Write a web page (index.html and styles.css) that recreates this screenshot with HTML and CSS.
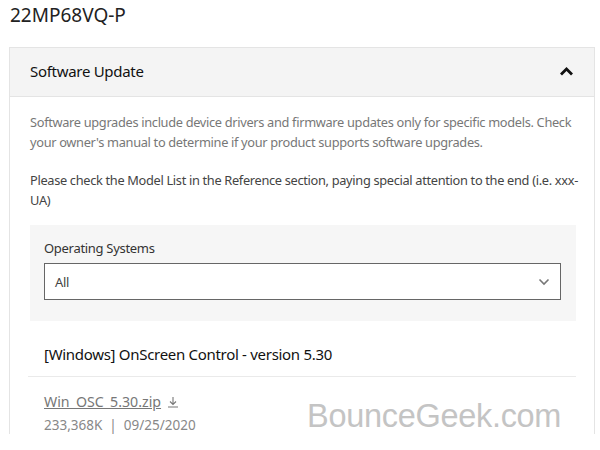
FILE: index.html
```html
<!DOCTYPE html>
<html lang="en">
<head>
    <meta charset="UTF-8">
    <meta name="viewport" content="width=device-width, initial-scale=1.0">
    <title>22MP68VQ-P Software Update</title>
    <link rel="stylesheet" href="styles.css">
</head>
<body>
    <h1 class="model">22MP68VQ-P</h1>
    <div class="card">
        <div class="card-head">
            <span>Software Update</span>
            <svg class="chev-up" width="15" height="10" viewBox="0 0 15 10">
                <path d="M2 8.5 L7.5 3 L13 8.5" fill="none" stroke="#111" stroke-width="2.8"/>
            </svg>
        </div>
        <div class="card-body">
            <p class="note">Software upgrades include device drivers and firmware updates only for specific models. Check your owner's manual to determine if your product supports software upgrades.</p>
            <p class="notice">Please check the Model List in the Reference section, paying special attention to the end (i.e. xxx-UA)</p>
            <div class="filter">
                <label>Operating Systems</label>
                <div class="select">
                    <span>All</span>
                    <svg width="12" height="8" viewBox="0 0 12 8">
                        <path d="M1.5 1.5 L6 6 L10.5 1.5" fill="none" stroke="#777" stroke-width="1.6"/>
                    </svg>
                </div>
            </div>
            <div class="item">
                <h2>[Windows] OnScreen Control - version 5.30</h2>
                <div class="file">
                    <a href="#">Win_OSC_5.30.zip</a>
                    <svg width="12" height="12" viewBox="0 0 12 12">
                        <path d="M6 1 V8 M3 5.5 L6 8.5 L9 5.5 M1 11 H11" fill="none" stroke="#777" stroke-width="1.1"/>
                    </svg>
                </div>
                <div class="meta">233,368K &nbsp;|&nbsp; 09/25/2020</div>
            </div>
        </div>
    </div>
    <div class="watermark">BounceGeek.com</div>
</body>
</html>
```

FILE: styles.css
```css
body {
    font-family: "Noto Sans", "Open Sans", sans-serif;
    background-color: #fff;
    color: #222;
    margin: 0;
    padding: 0 5px 0 9px;
    letter-spacing: -0.3px;
}
.model {
    font-size: 19px;
    font-weight: normal;
    letter-spacing: 0;
    margin: 0;
    padding: 2px 0 0 1px;
    height: 45px;
    color: #222;
}
.card {
    border: 1px solid #e4e4e4;
    border-bottom: none;
}
.card-head {
    display: flex;
    justify-content: space-between;
    align-items: center;
    background-color: #f4f4f4;
    height: 49px;
    padding: 0 20px 3px 20px;
    box-sizing: border-box;
    border-bottom: 1px solid #e4e4e4;
    font-size: 15px;
    color: #111;
}
.card-body {
    padding: 15px 18px 0 20px;
}
.note {
    font-size: 12.8px;
    line-height: 20px;
    letter-spacing: -0.32px;
    color: #777;
    margin: 0 -8px 18px 0;
}
.notice {
    font-size: 12.8px;
    line-height: 20px;
    letter-spacing: -0.32px;
    color: #444;
    margin: 0 -8px 15px 0;
}
.filter {
    background-color: #f6f6f6;
    padding: 14px 15px 21px 14px;
}
.filter label {
    display: block;
    font-size: 13px;
    color: #333;
    margin-bottom: 6px;
}
.select {
    display: flex;
    justify-content: space-between;
    align-items: center;
    background: #fff;
    border: 1px solid #666;
    height: 35px;
    padding: 0 10px 0 10px;
    font-size: 13px;
    color: #444;
}
.item h2 {
    font-size: 15px;
    font-weight: normal;
    color: #111;
    margin: 0 0 0 -2px;
    padding: 23px 0 12px 16px;
    border-bottom: 1px solid #eaeaea;
}
.file {
    display: flex;
    align-items: center;
    gap: 6px;
    padding: 15px 0 0 14px;
}
.file a {
    font-size: 14.2px;
    letter-spacing: 0;
    color: #777;
}
.meta {
    font-size: 13.5px;
    letter-spacing: 0;
    color: #888;
    padding: 5px 0 0 14px;
}
.watermark {
    position: absolute;
    left: 307px;
    top: 398px;
    font-family: "Liberation Sans", Arial, sans-serif;
    font-size: 32.5px;
    color: #c4c4c4;
}
```
